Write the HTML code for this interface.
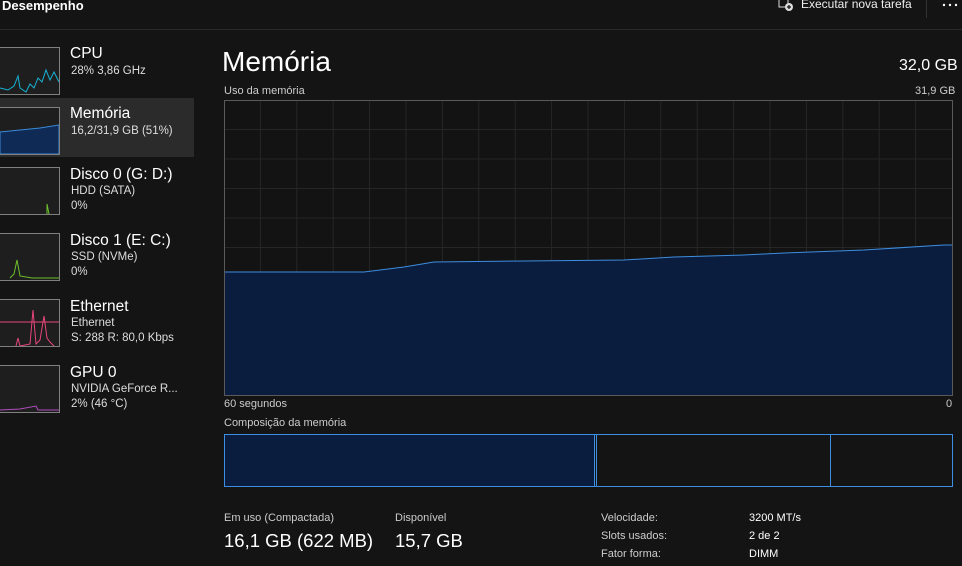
<!DOCTYPE html><html><head><style>
body{margin:0;width:962px;height:566px;background:#141414;font-family:"Liberation Sans",sans-serif;color:#fff;overflow:hidden;position:relative}
.a{position:absolute;white-space:nowrap}
.thumb{position:absolute;left:0;width:59px;height:46px;border:1px solid #808080;border-left:none;background:#1e1e1e}
.t1{font-size:15.5px}.t2{font-size:11.5px;color:#ddd}
.lbl{font-size:11px;color:#ccc}
</style></head><body>
<div class="a" style="left:2px;top:-2px;font-size:13px;font-weight:bold">Desempenho</div>
<div class="a" style="left:0;top:29px;width:962px;height:1px;background:#2a2a2a"></div>
<svg class="a" style="left:778px;top:0" width="16" height="12"><rect x="1" y="-2" width="9" height="9" fill="none" stroke="#ddd"/><circle cx="11" cy="7" r="4" fill="#ddd"/><path d="M11 5v4M9 7h4" stroke="#141414" stroke-width="1.3"/></svg>
<div class="a" style="left:801px;top:-3px;font-size:12px;color:#eee">Executar nova tarefa</div>
<div class="a" style="left:926px;top:0;width:1px;height:18px;background:#333"></div>
<svg class="a" style="left:942px;top:3px" width="18" height="4"><circle cx="2" cy="2" r="1.2" fill="#fff"/><circle cx="8" cy="2" r="1.2" fill="#fff"/><circle cx="14" cy="2" r="1.2" fill="#fff"/></svg>
<div class="a" style="left:0;top:98px;width:194px;height:59px;background:#2b2b2b"></div>
<div class="thumb" style="top:47px"><svg width="59" height="46"><path d="M0 40L8 42L14 38L18 28L20 40L26 44L30 36L34 40L38 30L42 34L46 22L50 32L54 24L59 34" fill="none" stroke="#17b3d6"/></svg></div>
<div class="a t1" style="left:70px;top:45px">CPU</div><div class="a t2" style="left:71px;top:65px">28% 3,86 GHz</div>
<div class="thumb" style="top:107px"><svg width="59" height="46"><path d="M0 24L20 22L40 20L59 17V46H0Z" fill="#0f2a55" stroke="#3a8ad8"/></svg></div>
<div class="a t1" style="left:70px;top:105px">Memória</div><div class="a t2" style="left:71px;top:125px">16,2/31,9 GB (51%)</div>
<div class="thumb" style="top:167px"><svg width="59" height="46"><path d="M47 46V36l2 10" fill="none" stroke="#6ec02e"/></svg></div>
<div class="a t1" style="left:70px;top:166px">Disco 0 (G: D:)</div><div class="a t2" style="left:71px;top:185px">HDD (SATA)</div><div class="a t2" style="left:71px;top:200px">0%</div>
<div class="thumb" style="top:233px"><svg width="59" height="46"><path d="M10 44L14 40L17 26L20 42L32 44L40 44L59 44" fill="none" stroke="#6ec02e"/></svg></div>
<div class="a t1" style="left:70px;top:232px">Disco 1 (E: C:)</div><div class="a t2" style="left:71px;top:251px">SSD (NVMe)</div><div class="a t2" style="left:71px;top:266px">0%</div>
<div class="thumb" style="top:299px"><svg width="59" height="46"><path d="M0 22H59" stroke="#e8457a"/><path d="M16 46L18 38L20 46L30 44L33 10L36 44L40 40L44 16L47 38L50 42L54 46" fill="none" stroke="#e8457a"/></svg></div>
<div class="a t1" style="left:70px;top:298px">Ethernet</div><div class="a t2" style="left:71px;top:317px">Ethernet</div><div class="a t2" style="left:71px;top:332px">S: 288 R: 80,0 Kbps</div>
<div class="thumb" style="top:365px"><svg width="59" height="46"><path d="M0 44L20 43L36 40L38 44L59 44" fill="none" stroke="#b04dbd"/></svg></div>
<div class="a t1" style="left:70px;top:364px">GPU 0</div><div class="a t2" style="left:71px;top:383px">NVIDIA GeForce R...</div><div class="a t2" style="left:71px;top:398px">2% (46 °C)</div>

<div class="a" style="left:222px;top:46px;font-size:28px">Memória</div>
<div class="a" style="left:899px;top:57px;font-size:16px">32,0 GB</div>
<div class="a lbl" style="left:224px;top:85px">Uso da memória</div>
<div class="a lbl" style="left:915px;top:85px">31,9 GB</div>
<svg class="a" style="left:224px;top:100px" width="729" height="296">
<rect width="729" height="296" fill="#131313"/>
<g stroke="#262626"><path d="M36.4 0V296M72.8 0V296M109.2 0V296M145.6 0V296M182 0V296M218.4 0V296M254.8 0V296M291.2 0V296M327.6 0V296M364 0V296M400.4 0V296M436.8 0V296M473.2 0V296M509.6 0V296M546 0V296M582.4 0V296M618.8 0V296M655.2 0V296M691.6 0V296"/>
<path d="M0 29.5H729M0 59H729M0 88.5H729M0 118H729M0 147.5H729M0 177H729M0 206.5H729M0 236H729M0 265.5H729"/></g>
<path d="M0 172L140 172L180 167L210 162L300 161L400 160L450 157L520 155L560 153L640 150L720 145L729 145V296H0Z" fill="#0b1d3e" stroke="#3d8de0"/>
<rect x="0.5" y="0.5" width="728" height="295" fill="none" stroke="#5a5a5a"/>
</svg>
<div class="a lbl" style="left:224px;top:398px">60 segundos</div>
<div class="a lbl" style="left:946px;top:398px">0</div>
<div class="a lbl" style="left:224px;top:417px">Composição da memória</div>
<div class="a" style="left:224px;top:434px;width:727px;height:51px;border:1px solid #3d8de0"></div>
<div class="a" style="left:225px;top:435px;width:369px;height:51px;background:#0b1d3e;border-right:1px solid #3d8de0"></div>
<div class="a" style="left:596px;top:435px;width:1px;height:51px;background:#3d8de0"></div>
<div class="a" style="left:830px;top:435px;width:1px;height:51px;background:#3d8de0"></div>
<div class="a lbl" style="left:224px;top:512px">Em uso (Compactada)</div>
<div class="a" style="left:224px;top:530px;font-size:18.5px">16,1 GB (622 MB)</div>
<div class="a lbl" style="left:395px;top:512px">Disponível</div>
<div class="a" style="left:395px;top:530px;font-size:18.5px">15,7 GB</div>
<div class="a lbl" style="left:601px;top:512px">Velocidade:</div><div class="a lbl" style="left:749px;top:512px;color:#fff">3200 MT/s</div>
<div class="a lbl" style="left:601px;top:530px">Slots usados:</div><div class="a lbl" style="left:749px;top:530px;color:#fff">2 de 2</div>
<div class="a lbl" style="left:601px;top:548px">Fator forma:</div><div class="a lbl" style="left:749px;top:548px;color:#fff">DIMM</div>
</body></html>
